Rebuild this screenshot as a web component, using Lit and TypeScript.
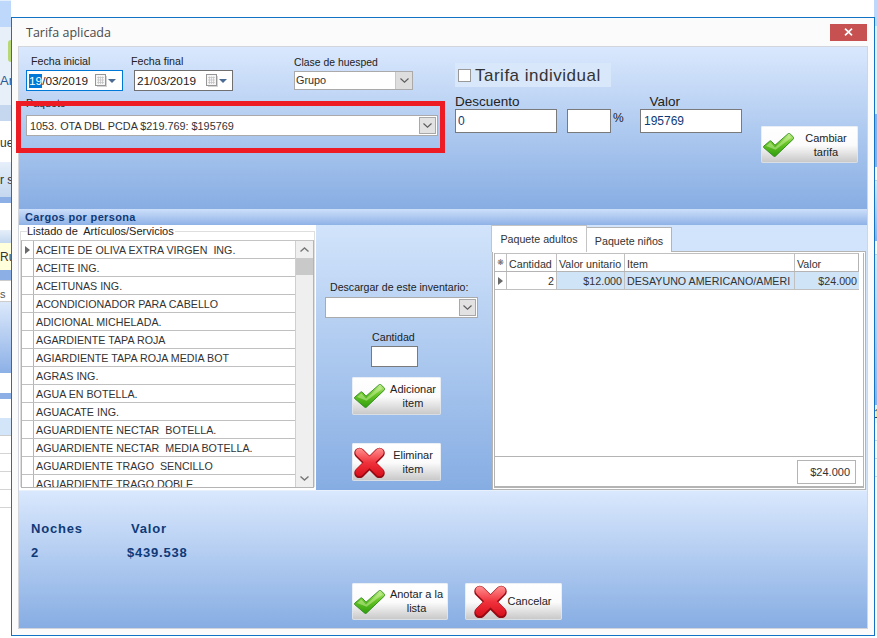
import { LitElement, html, css, svg } from "lit";
import { customElement } from "lit/decorators.js";

const ITEMS = [
  "ACEITE DE OLIVA EXTRA VIRGEN  ING.",
  "ACEITE ING.",
  "ACEITUNAS ING.",
  "ACONDICIONADOR PARA CABELLO",
  "ADICIONAL MICHELADA.",
  "AGARDIENTE TAPA ROJA",
  "AGIARDIENTE TAPA ROJA MEDIA BOT",
  "AGRAS ING.",
  "AGUA EN BOTELLA.",
  "AGUACATE ING.",
  "AGUARDIENTE NECTAR  BOTELLA.",
  "AGUARDIENTE NECTAR  MEDIA BOTELLA.",
  "AGUARDIENTE TRAGO  SENCILLO",
  "AGUARDIENTE TRAGO DOBLE",
];

const checkIcon = () => html`<svg class="ico-check" viewBox="0 0 31 24" width="31" height="24">
  <defs><linearGradient id="gc" x1="0" y1="0" x2="0" y2="1">
    <stop offset="0" stop-color="#c4ee8c"/><stop offset=".4" stop-color="#6cc828"/><stop offset="1" stop-color="#2f9e0c"/>
  </linearGradient></defs>
  <path d="M.7 13.2 6.6 8.2c.7-.5 1.2-.4 1.8.1l3.6 3.9L24.9.9c.8-.7 1.5-.7 2.2 0l3.4 3.2c.6.6.6 1.2 0 1.8L12.6 23c-.7.7-1.4.7-2.1 0L.7 14.6c-.4-.5-.4-1 0-1.4Z" fill="url(#gc)" stroke="#2b8a1c" stroke-width=".9"/>
  <path d="M3 13 7.4 9.6l4.6 4.8L25.8 2.4l2.6 2.4-15.8 12Z" fill="#dcf7b4" opacity=".45"/>
</svg>`;

const crossIcon = (size: number) => html`<svg viewBox="0 0 31 31" width=${size} height=${size}>
  <defs><linearGradient id="gx" gradientUnits="userSpaceOnUse" x1="0" y1="2" x2="0" y2="29">
    <stop offset="0" stop-color="#ff8a8a"/><stop offset=".5" stop-color="#f0323c"/><stop offset="1" stop-color="#d8101c"/>
  </linearGradient></defs>
  <g fill="none" stroke-linecap="round">
    ${svg`<path d="M5.5 6 25.5 26M25.5 6 5.5 26" stroke="#960a14" stroke-width="10.5"/>`}
    ${svg`<path d="M5.5 5.4 25.5 25M25.5 5.4 5.5 25" stroke="url(#gx)" stroke-width="8.4"/>`}
  </g>
</svg>`;

const chevron = () => html`<svg viewBox="0 0 9 5" width="9" height="5"><path d="M.5.5 4.5 4.2 8.5.5" fill="none" stroke="#5c5c5c" stroke-width="1.1"/></svg>`;

const calendar = () => html`<svg viewBox="0 0 12 13" width="12" height="13">
  <rect x="2" y="2" width="10" height="11" fill="#d4d4d4"/>
  <rect x=".5" y=".5" width="10" height="11" fill="#f6f6f6" stroke="#969696"/>
  <path d="M2 3.5h7M2 6h7M2 8.5h7M3.5 2.5V10M5.5 2.5V10M7.5 2.5V10" stroke="#c0c0c0" stroke-width=".7"/>
</svg>`;

const caret = () => html`<svg viewBox="0 0 8 4" width="8" height="4"><path d="M0 0h8L4 4Z" fill="#4c6b93"/></svg>`;

@customElement("app-root")
export class AppRoot extends LitElement {
  static styles = css`
    :host { display: block; position: relative; width: 877px; height: 638px; overflow: hidden; background: #fff;
      font-family: "Liberation Sans", Arial, sans-serif; font-size: 10.7px; color: #222; }
    * { box-sizing: border-box; }

    /* desktop behind the dialog */
    .desk { display: flex; justify-content: space-between; height: 100%; }
    .strip { display: flex; flex-direction: column; overflow: hidden; white-space: nowrap; font-size: 12px; color: #333; line-height: 1; }
    .strip.l { width: 11px; }
    .strip.r { width: 3px; }
    .s { flex: none; display: flex; align-items: center; overflow: hidden; }
    .sky { background: #bdd8fb; }
    .h1 { height: 1px; background: #e4effd; }
    .h26 { height: 26px; }
    .h78 { height: 78px; background: #e7eff9; position: relative; align-items: flex-end; padding-bottom: 18px; color: #2a5a96; font-size: 13px; }
    .blob { position: absolute; left: 8px; top: 13px; width: 6px; height: 22px; border-radius: 3px; background: #b8d878; }
    .h16 { height: 16px; background: #c4d7ee; }
    .h3w { height: 3px; background: #fff; }
    .h34 { height: 38px; background: #fff; }
    .hgrad { height: 35px; background: linear-gradient(#e6effa, #c3d7ef); }
    .hblue { height: 6px; background: #8cb0e6; }
    .h27 { height: 27px; background: #fff; }
    .hgrad2 { height: 13px; background: linear-gradient(#e6effa, #c3d7ef); }
    .hyel { height: 27px; background: #ffffdc; }
    .hblue2 { height: 10px; background: #8cb0e6; }
    .hbox { height: 22px; background: #fff; border-top: 1px solid #ccc; border-bottom: 1px solid #ccc; align-items: flex-end; padding-bottom: 1px; font-size: 11px; color: #555; }
    .hgrad3 { height: 71px; background: linear-gradient(#dbe8fb, #8cb0e6); }
    .h20 { height: 20px; background: #fff; }
    .h19 { height: 19px; background: #fff; }
    .hsel { height: 18px; background: #d2e5f9; border-bottom: 1px solid #ccc; }
    .hrow { height: 18px; background: #fff; border-bottom: 1px solid #d4d4d4; }
    .fill { flex: 1; background: #fff; }
    .rlight { height: 88px; background: #e7eff9; }
    .rblue { height: 53px; background: #8cb0e6; }
    .rwhite { height: 14px; background: #fff; border-bottom: 1px solid #ccc; }
    .rgrad { height: 60px; background: linear-gradient(#dbe8fb, #8cb0e6); }
    .rgrad2 { height: 150px; background: linear-gradient(#dbe8fb, #8cb0e6); }
    .rnum { height: 18px; background: #f3f3f3; font-size: 12px; }

    /* dialog window */
    .win { position: absolute; left: 11px; top: 17px; width: 864px; height: 619px; background: #fbfbfb; border: 1px solid #1272c4;
      padding: 0 6px 6px; display: flex; flex-direction: column; }
    .title { height: 28px; flex: none; display: flex; align-items: center; justify-content: space-between; padding: 0 1px 0 8px; }
    .title span { font-family: "Open Sans", "Noto Sans", sans-serif; font-size: 12.5px; color: #4a4a4a; margin-top: 1px; }
    .close { width: 37px; height: 17px; background: #c75050; display: flex; align-items: center; justify-content: center; }
    .client { flex: 1; border: 1px solid #d2d6dc; display: flex; flex-direction: column; background: #fff; min-height: 0; }

    .top { height: 162px; flex: none; position: relative; display: flex; padding-left: 7px; background: linear-gradient(#d9e8fd, #87ade3); }
    .lcol { width: 412px; flex: none; padding-top: 7px; }
    .dates { display: flex; height: 37px; }
    .fld { flex: none; }
    .f1 { width: 97px; } .f2 { width: 99px; margin-left: 11px; } .f3 { width: 119px; margin-left: 61px; padding-top: 2px; }
    .lab { display: block; height: 14px; line-height: 14px; white-space: nowrap; color: #222; }
    .f1 .lab { padding-left: 5px; } .f2 .lab { margin-left: -3px; } .f3 .lab { height: 15px; font-size: 10.4px; }
    .date { height: 21px; margin-top: 2px; border: 1px solid #707070; background: #fff; display: flex; align-items: center; padding: 0 5px 0 2px; font-size: 11.8px; color: #222; }
    .date.focus { border: 1px solid #0078d7; padding-right: 6px; }
    .date .txt { flex: 1; white-space: nowrap; }
    .date .cal { flex: none; margin-right: 1px; display: flex; }
    .selt { background: #0078d7; color: #fff; }
    .combo { display: flex; align-items: center; background: #fff; border: 1px solid #aaa; font-size: 10.85px; color: #333; padding-left: 1px; white-space: nowrap; }
    .combo .t { flex: 1; }
    .combo .b { flex: none; background: #e2e2e2; display: flex; align-items: center; justify-content: center; }
    .combo.small { height: 19px; }
    .combo.small .t { padding-bottom: 2px; }
    .combo.small .b { width: 17px; height: 17px; border-left: 1px solid #c8c8c8; background: #dedede; }
    .combo.big { height: 21px; }
    .combo.big .b { width: 17px; height: 17px; border: 1px solid #a8a8a8; margin-right: 1px; }
    .paq { margin-top: 5px; }
    .paq .combo { margin-top: 5px; padding-left: 3px; }
    .redbox { position: absolute; left: -3px; top: 54px; width: 429px; height: 52px; border: 5px solid #ed1c24; pointer-events: none; }

    .rcol { width: 287px; margin-left: 17px; flex: none; padding-top: 16px; }
    .tind { width: 156px; height: 24px; background: #d8e7fa; display: flex; align-items: center; padding: 1px 0 0 3px; gap: 4px; font-size: 17px; letter-spacing: .5px; color: #333; white-space: nowrap; }
    .cb { width: 13px; height: 13px; background: #fff; border: 1px solid #999; flex: none; }
    .lrow { display: flex; margin-top: 7px; height: 15px; font-size: 13.5px; line-height: 15px; color: #222; }
    .lrow .v { margin-left: 130px; }
    .irow { display: flex; }
    .inp { height: 24px; border: 1px solid #7a7a7a; background: #fff; font-size: 12px; color: #0f3a78; display: flex; align-items: center; padding-left: 2px; }
    .i1 { width: 102px; } .i2 { width: 44px; margin-left: 10px; } .i3 { width: 102px; padding-left: 3px; }
    .pct { width: 29px; padding-left: 2px; font-size: 12px; line-height: 18px; }
    .tbtn { margin: 79px 0 0 19px; }

    .btn { flex: none; display: flex; align-items: center; border-radius: 2px; padding-left: 2px;
      background: linear-gradient(#fff 0, #fbfbfb 52%, #c6c6c6 100%); box-shadow: 0 0 0 1px rgba(225,232,242,.7) inset; color: #222; font-size: 11px; line-height: 14px; text-align: center; }
    .btn .lbl { flex: 1; }
    .bcam { width: 97px; height: 37px; }
    .bmid { width: 89px; height: 38px; }
    .bano { width: 96px; height: 37px; }
    .bano .lbl { padding-bottom: 2px; }
    .bcan { width: 97px; height: 37px; padding-left: 9px; margin-left: 17px; }
    .bcan .lbl { padding: 0 10px 2px 0; }

    .sect { height: 16px; flex: none; background: linear-gradient(#cddffa, #8fb2e6); padding-left: 6px; font-weight: 700; font-size: 11px; letter-spacing: .35px; line-height: 16px; color: #0f3a78; }

    .main { height: 265px; flex: none; display: flex; }
    .list { width: 297px; flex: none; background: #fff; padding: 6px 1px 0 1px; }
    .gb { position: relative; height: 256px; border: 1px solid #dedede; padding: 8px 0 0 0; }
    .legend { position: absolute; left: 6px; top: -7px; background: #fff; line-height: 13px; padding-right: 1px; white-space: pre; color: #222; font-size: 11px; }
    .grid { display: flex; height: 248px; border: 1px solid #b4b4b4; border-top: 1px solid #c4c4c4; background: #fff; }
    .rows { flex: 1; overflow: hidden; min-width: 0; }
    .row { display: flex; height: 18px; border-bottom: 1px solid #c0c0c0; }
    .rh { width: 12px; flex: none; border-right: 1px solid #b4b4b4; display: flex; align-items: center; justify-content: center; }
    .cell { flex: 1; padding-left: 2px; white-space: pre; line-height: 18px; color: #333; overflow: hidden; }
    .sb { width: 18px; flex: none; background: #efefef; border-left: 1px solid #cfcfcf; display: flex; flex-direction: column; align-items: stretch; }
    .arr { height: 17px; flex: none; display: flex; align-items: center; justify-content: center; }
    .thumb { height: 17px; flex: none; background: #c9c9c9; }
    .sbfill { flex: 1; }

    .mid { width: 176px; flex: none; display: flex; flex-direction: column; align-items: flex-start; background: linear-gradient(#d2e4fb, #86ade3); padding-top: 55px; }
    .mid .dl { height: 14px; line-height: 14px; margin: 0 0 3px 14px; white-space: nowrap; font-size: 10.6px; }
    .mid .combo { width: 153px; margin-left: 9px; height: 21px; }
    .mid .cl { margin: 12px 0 2px 56px; height: 14px; line-height: 14px; }
    .mid .qty { width: 47px; height: 21px; border: 1px solid #7a7a7a; background: #fff; margin: 0 0 10px 55px; }
    .mid .btn { margin-left: 36px; }
    .mid .btn + .btn { margin-top: 28px; }

    .right { flex: 1; background: #d2e4fb; display: flex; flex-direction: column; min-width: 0; }
    .tabs { display: flex; height: 27px; flex: none; align-items: flex-end; position: relative; z-index: 1; }
    .tab { background: #fff; border: 1px solid #b4b4b4; border-bottom: none; display: flex; align-items: center; justify-content: center; color: #333; white-space: nowrap; }
    .tab.on { width: 96px; height: 27px; border-color: #c4c4c4; margin-left: -1px; }
    .tab.off { width: 85px; height: 25px; border-left: none; padding-top: 1px; }
    .page { width: 374px; height: 239px; margin-top: -1px; border: 1px solid #b4b4b4; background: #fff; padding: 1px; }
    .dg { height: 235px; border: 1px solid #b4b4b4; border-bottom-width: 2px; display: flex; flex-direction: column; border-top: none; }
    .dgh, .dgr { width: 364px; display: grid; grid-template-columns: 12px 50px 68px 170px 64px; flex: none; }
    .dgh { height: 19px; border-top: 1px solid #c0c0c0; border-bottom: 1px solid #b4b4b4; border-right: 1px solid #b4b4b4; }
    .dgr { height: 18px; border-bottom: 1px solid #c0c0c0; border-right: 1px solid #c0c0c0; }
    .dgh > div, .dgr > div { border-right: 1px solid #c0c0c0; padding: 0 2px; line-height: 20px; white-space: nowrap; overflow: hidden; color: #333; }
    .dgr > div { line-height: 19px; }
    .dgh > div:last-child, .dgr > div:last-child { border-right: none; }
    .dgh > .star, .dgr > .mark { padding: 0; display: flex; align-items: center; justify-content: center; color: #666; }
    .star { font-family: "DejaVu Sans", sans-serif; font-size: 8px; }
    .dgr > .num { text-align: right; padding-right: 2px; }
    .alt { background: #cfe4f7; }
    .dgspace { flex: 1; }
    .dgfoot { height: 30px; flex: none; border-top: 1px solid #b4b4b4; padding: 3px 0 0 302px; }
    .tot { width: 59px; height: 24px; border: 1px solid #b4b4b4; display: flex; align-items: center; justify-content: flex-end; padding-right: 5px; font-size: 11px; color: #333; }

    .gap { height: 1px; flex: none; background: #e8f0fb; }
    .bot { flex: 1; position: relative; background: linear-gradient(#d9e8fd, #87ade3); padding: 31px 0 0 12px; min-height: 0; }
    .stats { display: grid; grid-template-columns: 96px auto; justify-content: start; row-gap: 10px; font-weight: 700; font-size: 13px; letter-spacing: .8px; line-height: 14px; color: #0f3a78; }
    .stats .vh { padding-left: 4px; }
    .acts { display: flex; margin: 23px 0 0 321px; }
  `;

  private btn(cls: string, icon: unknown, text: unknown) {
    return html`<div class="btn ${cls}">${icon}<div class="lbl">${text}</div></div>`;
  }

  render() {
    return html`
      <div class="desk">
        <div class="strip l">
          <div class="s h1"></div><div class="s sky h26"></div>
          <div class="s h78"><i class="blob"></i>Ar</div>
          <div class="s h16"></div><div class="s h3w"></div>
          <div class="s h34">ue</div>
          <div class="s hgrad">r s</div><div class="s hblue"></div>
          <div class="s h27"></div>
          <div class="s hgrad2"></div><div class="s hyel">Ru</div><div class="s hblue2"></div>
          <div class="s hbox">s</div>
          <div class="s hgrad3"></div>
          <div class="s h20"></div><div class="s hblue"></div><div class="s h19"></div>
          <div class="s hsel"></div><div class="s hrow"></div><div class="s hrow"></div><div class="s hrow"></div><div class="s hrow"></div>
          <div class="fill"></div>
        </div>
        <div class="strip r">
          <div class="s sky h26"></div>
          <div class="s rlight"></div><div class="s rblue"></div><div class="s rwhite"></div>
          <div class="s rgrad"></div><div class="s rwhite"></div><div class="s rgrad2"></div>
          <div class="s rnum">1</div><div class="s hrow"></div><div class="s hrow"></div><div class="s hrow"></div>
          <div class="fill"></div>
        </div>
      </div>

      <div class="win">
        <div class="title">
          <span>Tarifa aplicada</span>
          <div class="close"><svg viewBox="0 0 9 8" width="9" height="8"><path d="M1 .7 8 7.3M8 .7 1 7.3" stroke="#fff" stroke-width="1.7"/></svg></div>
        </div>
        <div class="client">
          <section class="top">
            <div class="lcol">
              <div class="dates">
                <div class="fld f1"><span class="lab">Fecha inicial</span>
                  <div class="date focus"><span class="txt"><span class="selt">19</span>/03/2019</span><span class="cal">${calendar()}</span>${caret()}</div></div>
                <div class="fld f2"><span class="lab">Fecha final</span>
                  <div class="date"><span class="txt">21/03/2019</span><span class="cal">${calendar()}</span>${caret()}</div></div>
                <div class="fld f3"><span class="lab">Clase de huesped</span>
                  <div class="combo small"><span class="t">Grupo</span><span class="b">${chevron()}</span></div></div>
              </div>
              <div class="paq"><span class="lab">Paquete</span>
                <div class="combo big"><span class="t">1053. OTA DBL PCDA $219.769: $195769</span><span class="b">${chevron()}</span></div></div>
            </div>
            <div class="rcol">
              <div class="tind"><span class="cb"></span>Tarifa individual</div>
              <div class="lrow"><span>Descuento</span><span class="v">Valor</span></div>
              <div class="irow">
                <div class="inp i1">0</div><div class="inp i2"></div><div class="pct">%</div><div class="inp i3">195769</div>
              </div>
            </div>
            ${this.btn("bcam tbtn", checkIcon(), html`Cambiar<br />tarifa`)}
            <div class="redbox"></div>
          </section>

          <div class="sect">Cargos por persona</div>

          <section class="main">
            <div class="list">
              <div class="gb">
                <span class="legend">Listado de  Artículos/Servicios</span>
                <div class="grid">
                  <div class="rows">
                    ${ITEMS.map((t, i) => html`<div class="row"><div class="rh">${i === 0 ? html`<svg viewBox="0 0 5 8" width="5" height="8"><path d="M0 0 5 4 0 8Z" fill="#6a6a6a"/></svg>` : ""}</div><div class="cell">${t}</div></div>`)}
                  </div>
                  <div class="sb">
                    <div class="arr"><svg viewBox="0 0 9 5" width="9" height="5"><path d="M.5 4.5 4.5 1 8.5 4.5" fill="none" stroke="#777" stroke-width="1.4"/></svg></div>
                    <div class="thumb"></div><div class="sbfill"></div>
                    <div class="arr"><svg viewBox="0 0 9 5" width="9" height="5"><path d="M.5.5 4.5 4 8.5.5" fill="none" stroke="#777" stroke-width="1.4"/></svg></div>
                  </div>
                </div>
              </div>
            </div>

            <div class="mid">
              <div class="dl">Descargar de este inventario:</div>
              <div class="combo big"><span class="t"></span><span class="b">${chevron()}</span></div>
              <div class="cl">Cantidad</div>
              <div class="qty"></div>
              ${this.btn("bmid", checkIcon(), html`Adicionar<br />item`)}
              ${this.btn("bmid", crossIcon(31), html`Eliminar<br />item`)}
            </div>

            <div class="right">
              <div class="tabs">
                <div class="tab on">Paquete adultos</div>
                <div class="tab off">Paquete niños</div>
              </div>
              <div class="page">
                <div class="dg">
                  <div class="dgh"><div class="star">❋</div><div>Cantidad</div><div>Valor unitario</div><div>Item</div><div>Valor</div></div>
                  <div class="dgr"><div class="mark"><svg viewBox="0 0 5 8" width="5" height="8"><path d="M0 0 5 4 0 8Z" fill="#6a6a6a"/></svg></div>
                    <div class="num">2</div><div class="num alt">$12.000</div><div class="alt">DESAYUNO AMERICANO/AMERI</div><div class="num alt">$24.000</div></div>
                  <div class="dgspace"></div>
                  <div class="dgfoot"><div class="tot">$24.000</div></div>
                </div>
              </div>
            </div>
          </section>

          <div class="gap"></div>

          <section class="bot">
            <div class="stats">
              <div>Noches</div><div class="vh">Valor</div>
              <div>2</div><div>$439.538</div>
            </div>
            <div class="acts">
              ${this.btn("bano", checkIcon(), html`Anotar a la<br />lista`)}
              ${this.btn("bcan", crossIcon(33), "Cancelar")}
            </div>
          </section>
        </div>
      </div>
    `;
  }
}
